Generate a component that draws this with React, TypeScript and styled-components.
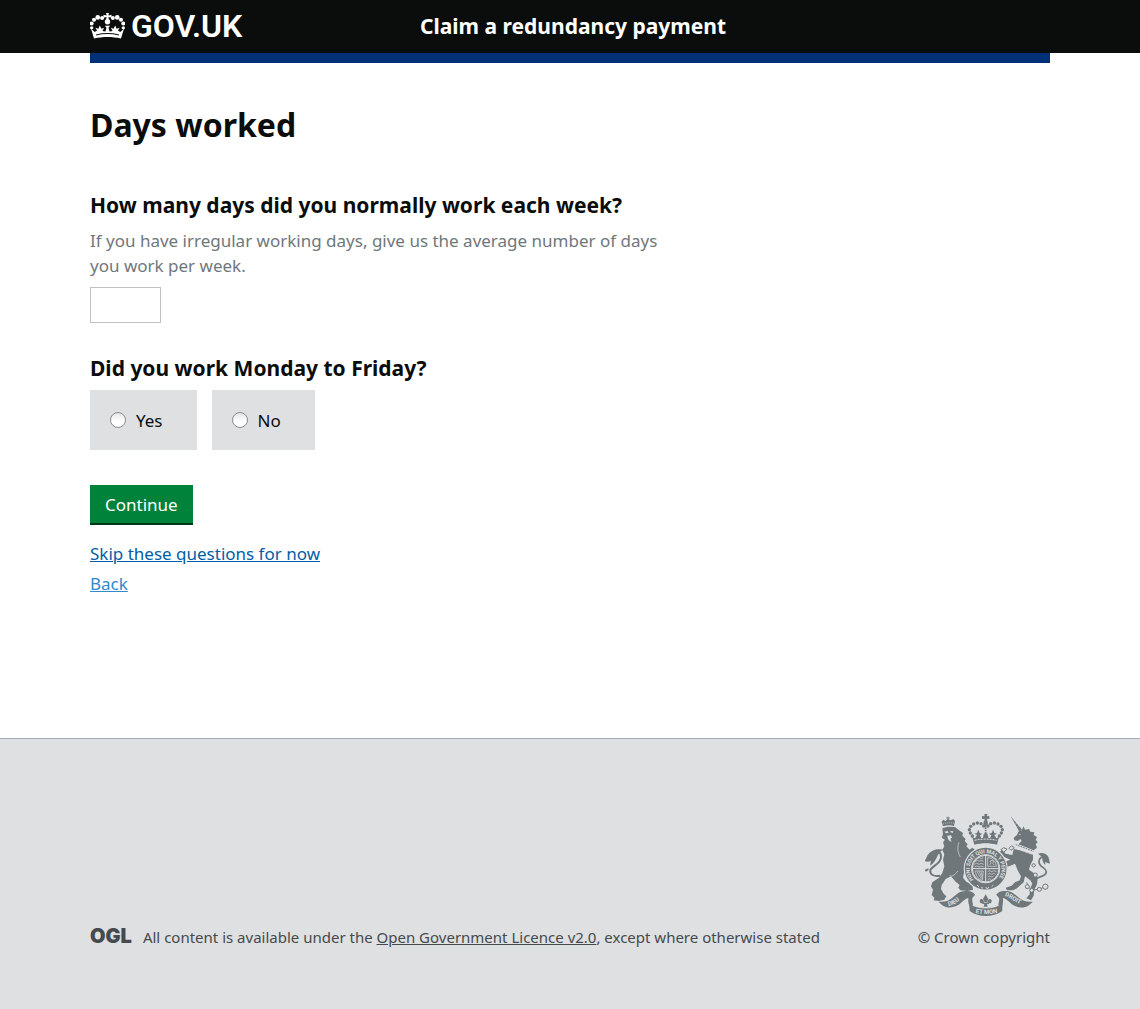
import React from 'react';
import styled, { createGlobalStyle } from 'styled-components';

const GlobalStyle = createGlobalStyle`
  *, *::before, *::after { box-sizing: border-box; }
  html { background: #dee0e2; }
  body {
    margin: 0;
    color: #0b0c0c;
    font-family: "Noto Sans", "Liberation Sans", sans-serif;
    font-size: 17px;
    line-height: 25px;
  }
  #root { min-height: 100vh; display: flex; flex-direction: column; }
`;

const Container = styled.div`
  max-width: 960px;
  margin: 0 auto;

  @media (max-width: 1020px) {
    margin: 0 30px;
  }
`;

const Header = styled.header`
  background: #0b0c0c;
`;

const HeaderRow = styled(Container)`
  display: flex;
  align-items: center;
  min-height: 53px;
  padding-bottom: 2px;
`;

const LogoColumn = styled.div`
  display: flex;
  flex: 0 0 330px;
`;

const LogoLink = styled.a`
  display: inline-flex;
  align-items: center;
  gap: 6px;
  color: #fff;
  font: 600 32px/42px Roboto, "Liberation Sans", sans-serif;
  text-decoration: none;
`;

const ServiceName = styled.a`
  color: #fff;
  font-size: 21px;
  font-weight: 700;
  line-height: 30px;
  text-decoration: none;
`;

const BlueBar = styled(Container)`
  height: 10px;
  background: #003078;
`;

const Main = styled.main`
  background: #fff;
  flex: 1 0 auto;
  padding-bottom: 139px;
`;

const PageTitle = styled.h1`
  margin: 40px 0 43px;
  font-size: 32px;
  font-weight: 700;
  line-height: 44px;
`;

const Question = styled.section`
  max-width: 600px;
  margin-bottom: 30px;
`;

const QuestionLabel = styled.label`
  display: block;
  font-size: 21px;
  font-weight: 700;
  line-height: 30px;
`;

const Hint = styled.p`
  margin: 8px 0 9px;
  color: #6f777b;
`;

const DaysInput = styled.input`
  display: block;
  width: 71px;
  height: 36px;
  padding: 4px;
  border: 1px solid #bfc1c3;
  font: inherit;
`;

const RadioGroup = styled.fieldset`
  margin: 0 0 35px;
  padding: 0;
  border: 0;
`;

const Legend = styled.legend`
  padding: 0;
  margin-bottom: 7px;
  font-size: 21px;
  font-weight: 700;
  line-height: 30px;
`;

const RadioRow = styled.div`
  display: flex;
  gap: 15px;
`;

const RadioBlock = styled.label`
  display: flex;
  align-items: center;
  gap: 10px;
  height: 60px;
  padding: 0 34px 0 20px;
  background: #dee0e2;
  cursor: pointer;
`;

const Radio = styled.input`
  appearance: none;
  width: 16px;
  height: 16px;
  margin: 0;
  border: 1px solid #8b8c8d;
  border-radius: 50%;
  background: linear-gradient(#e6e6e6, #fff 60%);

  &:checked {
    background: radial-gradient(circle, #0b0c0c 3px, #fff 4px);
  }
`;

const ContinueButton = styled.button`
  display: block;
  height: 40px;
  margin: 0 0 16px;
  padding: 0 15px;
  border: 0;
  border-bottom: 2px solid #003618;
  background: #00823b;
  color: #fff;
  font: inherit;
  cursor: pointer;
`;

const Links = styled.div`
  display: flex;
  flex-direction: column;
  align-items: flex-start;
  gap: 5px;
`;

const TextLink = styled.a<{ $color: string }>`
  color: ${(p) => p.$color};
`;

const Footer = styled.footer`
  border-top: 1px solid #a1acb2;
  background: #dee0e2;
  color: #454a4c;
  font-size: 15px;
  line-height: 25px;
  padding: 75px 0 59px;
`;

const FooterRow = styled(Container)`
  display: flex;
  align-items: flex-end;
  justify-content: space-between;
  gap: 30px;
`;

const Licence = styled.div`
  display: flex;
  align-items: center;
  gap: 11px;
`;

const OglMark = styled.a`
  color: #454a4c;
  font: 900 20px/20px Inter, "Liberation Sans", sans-serif;
  padding-bottom: 4px;
  text-decoration: none;
`;

const LicenceText = styled.p`
  margin: 0;
`;

const Copyright = styled.a`
  display: flex;
  flex-direction: column;
  align-items: flex-end;
  gap: 9px;
  color: inherit;
  text-decoration: none;
`;

function CrownIcon() {
  const beads: [number, number, number][] = [
    [5, 44, 5], [5, 31, 6], [12, 20, 6], [23, 13, 7], [36, 15, 6],
    [99, 44, 5], [99, 31, 6], [92, 20, 6], [81, 13, 7], [68, 15, 6],
  ];
  return (
    <svg width="35" height="26" viewBox="0 0 104 77" fill="#fff" aria-hidden="true">
      {beads.map(([x, y, r]) => <circle key={`${x}-${y}`} cx={x} cy={y} r={r} />)}
      <path d="M48 0h8l-1 7 9-2v9l-9-2 1 8h-8l1-8-9 2V5l9 2z" />
      <circle cx="52" cy="26" r="8" />
      <path d="M3 47L14 56L21 52L16 44L25 47L29 37L34 47L42 44L37 53L46 55L49 44L44 38H60L55 44L58 55L67 53L62 44L70 47L75 37L79 47L88 44L83 52L90 56L101 47L92 76C66 70 38 70 12 76Z" />
      <path d="M18 65C40 60 64 60 86 65" fill="none" stroke="#0b0c0c" strokeWidth="3" />
    </svg>
  );
}

function Lion() {
  return (
    <g>
      <path d="M84 64L80 50l5-6 6 4 8-6 8 4 8-4 5 6-3 15c-10-4-22-3-33 1z" />
      <path d="M99 46V35M94 39h10" fill="none" stroke="#6f777b" strokeWidth="3" />
      <path d="M84 57c10-4 22-5 33-2" fill="none" stroke="#dee0e2" strokeWidth="2" strokeDasharray="3 3" />
      <path d="M82 70L98 65L120 66L132 76L144 84L142 92L152 102L149 108L158 118L154 124L164 134L172 128L182 136L180 148L168 152L158 162L152 172L160 182L152 196L146 206L144 218L154 230L172 240L174 254L158 258L136 256L130 248L134 240L122 230L108 214L92 222L80 240L78 252L86 266L94 274L88 284L72 288L56 286L58 278L50 270L54 254L48 244L52 232L72 218L82 204L88 184L84 164L88 148L82 134L88 124L84 112L90 104L80 98L84 88Z" />
      <path d="M88 80l10-2 3 5-8 2zM107 78l8 1-2 5-7-3zM97 92l11-1 3 7-5 3 4 10-9-5-3-7z" fill="#dee0e2" />
      <path d="M76 212C56 216 44 208 46 196C48 184 78 178 78 156C78 142 70 136 62 138" fill="none" stroke="#6f777b" strokeWidth="6" />
      <path d="M84 134C64 130 48 136 38 150C34 158 32 164 28 168C36 172 42 170 48 167C46 173 46 178 46 182C58 174 62 164 66 156C70 146 74 140 84 134Z" />
      <path d="M29 195l11-5 1 5-8 5z" />
      <path d="M104 212C112 216 122 208 128 198M132 112C126 128 128 142 136 156" fill="none" stroke="#dee0e2" strokeWidth="2" />
    </g>
  );
}

function Unicorn() {
  return (
    <g>
      <path d="M287 34L321 74L313 80Z" />
      <path d="M293 48l6-2M300 57l6-2M306 65l7-3" stroke="#dee0e2" strokeWidth="1" />
      <path d="M310 80L320 76L326 64L330 74L342 72L346 80L358 82L356 90L366 96L362 104L368 112L362 118L366 128L356 136L310 118L320 108L316 102L308 108L298 106L296 98L306 90Z" />
      <path d="M311 88l6-2-1 5z" fill="#dee0e2" />
      <path d="M302 119L356 139" fill="none" stroke="#6f777b" strokeWidth="3" strokeDasharray="5 3" />
      <path d="M296 132L316 136L354 148L354 164L346 180L342 194L356 204L368 220L366 238L358 254L356 272L348 286L334 280L344 268L346 250L352 236L346 226L330 214L326 232L314 242L306 250L294 256L276 256L272 248L290 242L300 232L314 226L318 214L308 196L300 176L286 182L268 188L254 184L252 174L266 172L286 164L268 156L254 152L252 142L262 136L272 146L292 150Z" />
      <path d="M297 128L354 149M303 126L309 134L315 129L321 138L328 133L333 142L340 137L345 146L353 142" fill="none" stroke="#dee0e2" strokeWidth="2" />
      <path d="M290 122l-8 8 6 6 10-8zM276 132l-10-4-8 6 8 9z" fill="none" stroke="#6f777b" strokeWidth="3" />
      <path d="M364 220C378 214 394 212 394 200C394 188 374 188 372 172C371 160 380 152 394 158" fill="none" stroke="#6f777b" strokeWidth="5" />
      <path d="M369 146C384 140 398 148 401 158C403 165 403 170 406 176C398 174 394 173 391 170V180C384 174 381 165 382 157C378 153 374 149 369 146Z" />
      <g fill="#dee0e2" stroke="#6f777b" strokeWidth="3">
        <circle cx="356" cy="181" r="5" />
        <circle cx="361" cy="210" r="6" />
        <circle cx="337" cy="245" r="6" />
        <circle cx="350" cy="256" r="6" />
        <circle cx="373" cy="253" r="6" />
        <circle cx="391" cy="245" r="8" />
      </g>
      <path d="M343 249l4 3M356 255l11-2M379 250l5-2M338 239l-3-7" stroke="#6f777b" strokeWidth="3" />
    </g>
  );
}

function RoyalCrown() {
  const beads: [number, number][] = [
    [172, 93], [166, 84], [163, 74], [167, 64], [176, 57], [187, 54], [198, 56], [206, 63],
    [253, 93], [259, 84], [262, 74], [258, 64], [249, 57], [238, 54], [227, 56], [219, 63],
  ];
  return (
    <g>
      <path d="M208 27h9l-1 7 7-1v9l-7-1 1 8h-9l1-8-8 1v-9l8 1z" />
      <circle cx="212" cy="54" r="7" />
      {beads.map(([x, y]) => <circle key={`${x}-${y}`} cx={x} cy={y} r="5" />)}
      <path d="M212 60v34" stroke="#6f777b" strokeWidth="5" strokeDasharray="5 2" />
      <path d="M172 96L180 100L186 90L178 86L186 84L190 74L194 84L202 86L195 91L199 100L204 98L206 88L212 82L218 88L220 98L225 100L229 91L222 86L230 84L234 74L238 84L246 86L238 90L244 100L252 96L246 119C224 113 200 113 178 119Z" />
      <path d="M179 106c22-5 44-5 66 0" fill="none" stroke="#dee0e2" strokeWidth="3" strokeDasharray="6 3" />
    </g>
  );
}

function Shield() {
  return (
    <g>
      <circle cx="212" cy="191" r="66" fill="#dee0e2" />
      <circle cx="212" cy="191" r="53" fill="none" stroke="#6f777b" strokeWidth="19" />
      <circle cx="212" cy="191" r="41" />
      <defs>
        <path id="garter" d="M176 224 A48 48 0 1 1 248 224" />
      </defs>
      <text fill="#dee0e2" fontFamily="Roboto, sans-serif" fontSize="16" fontWeight="700">
        <textPath href="#garter">HONI SOIT QUI MAL Y PENSE</textPath>
      </text>
      <path d="M186 240l6 5M198 248l6 1M212 246l5 6 5-6M230 245l5-5" stroke="#dee0e2" strokeWidth="3" />
      <path d="M212 150v82M171 191h82" stroke="#dee0e2" strokeWidth="3" />
      <circle cx="212" cy="191" r="40" fill="none" stroke="#dee0e2" strokeWidth="3" />
      <g fill="none" stroke="#dee0e2" strokeWidth="2">
        <path d="M181 169l6-3 6 3 5-3 8 3M177 178l8-3 7 3 6-3 8 3M189 160l5-2 5 3 6-3M178 186l7-3 7 3 6-3 8 3" />
        <path d="M218 184v-26l12 2 12 14 2 10zM224 180l4-7-3-5 7-2 4 5-3 4 5 5" />
        <path d="M181 198h24l-3 28c-13-3-19-14-21-28zM186 200l13 22M192 199l9 19M198 199l4 14" />
        <path d="M218 200l6-3 6 3 6-3 9 3M218 208l6-3 6 3 6-3 6 3M218 216l6-3 6 3 6-3M218 224l5-3 6 3" />
      </g>
    </g>
  );
}

function Ribbons() {
  return (
    <g>
      <path d="M70 290C88 292 102 288 114 277C127 265 137 256 157 258C168 258 176 262 180 270L164 282C158 276 150 282 140 292C126 308 100 312 84 302Z" />
      <path d="M354 290C336 292 322 288 310 277C297 265 287 256 267 258C256 258 248 262 244 270L260 282C266 276 274 282 284 292C298 308 324 312 340 302Z" />
      <path d="M180 268C168 268 158 277 160 290C161 298 164 302 164 318C190 338 234 338 262 318C261 302 264 298 264 290C266 277 256 268 244 268L252 280C254 288 250 292 250 302C230 311 196 311 174 302C174 292 170 288 172 280Z" />
      <path d="M173 301C198 312 228 312 251 301" fill="none" stroke="#dee0e2" strokeWidth="2" />
      <path d="M212 268l8 14-5 10h-6l-5-10zM194 287c3-10 14-3 13 7l-5-1c-1 4-8 2-8-6zM230 287c-3-10-14-3-13 7l5-1c1 4 8 2 8-6zM202 293h20v4h-20zM208 297h8l2 8h-12z" />
      <defs>
        <path id="motto-left" d="M100 303C124 300 130 284 158 270" />
        <path id="motto-centre" d="M166 320Q212 334 264 320" />
        <path id="motto-right" d="M269 273C290 278 302 299 336 302" />
      </defs>
      <g fill="#dee0e2" fontFamily="Roboto, sans-serif" fontSize="18" fontWeight="700">
        <text><textPath href="#motto-left">DIEU</textPath></text>
        <text><textPath href="#motto-centre" startOffset="16">ET MON</textPath></text>
        <text><textPath href="#motto-right">DROIT</textPath></text>
      </g>
    </g>
  );
}

function RoyalArms() {
  return (
    <svg width="125" height="102" viewBox="30 27 375 306" fill="#6f777b" aria-hidden="true">
      <Lion />
      <Unicorn />
      <RoyalCrown />
      <Shield />
      <Ribbons />
    </svg>
  );
}

export default function App() {
  return (
    <>
      <GlobalStyle />
      <Header>
        <HeaderRow>
          <LogoColumn>
            <LogoLink href="#">
              <CrownIcon />
              GOV.UK
            </LogoLink>
          </LogoColumn>
          <ServiceName href="#">Claim a redundancy payment</ServiceName>
        </HeaderRow>
      </Header>
      <Main>
        <BlueBar />
        <Container as="form">
          <PageTitle>Days worked</PageTitle>
          <Question>
            <QuestionLabel htmlFor="days">How many days did you normally work each week?</QuestionLabel>
            <Hint id="days-hint">
              If you have irregular working days, give us the average number of days you work per week.
            </Hint>
            <DaysInput id="days" name="days" type="text" aria-describedby="days-hint" />
          </Question>
          <RadioGroup>
            <Legend>Did you work Monday to Friday?</Legend>
            <RadioRow>
              <RadioBlock htmlFor="weekdays-yes">
                <Radio type="radio" id="weekdays-yes" name="weekdays" value="yes" />
                Yes
              </RadioBlock>
              <RadioBlock htmlFor="weekdays-no">
                <Radio type="radio" id="weekdays-no" name="weekdays" value="no" />
                No
              </RadioBlock>
            </RadioRow>
          </RadioGroup>
          <ContinueButton type="button">Continue</ContinueButton>
          <Links>
            <TextLink href="#" $color="#005ea5">Skip these questions for now</TextLink>
            <TextLink href="#" $color="#2e8aca">Back</TextLink>
          </Links>
        </Container>
      </Main>
      <Footer>
        <FooterRow>
          <Licence>
            <OglMark href="#">OGL</OglMark>
            <LicenceText>
              All content is available under the{' '}
              <TextLink href="#" $color="inherit">Open Government Licence v2.0</TextLink>, except where
              otherwise stated
            </LicenceText>
          </Licence>
          <Copyright href="#">
            <RoyalArms />
            © Crown copyright
          </Copyright>
        </FooterRow>
      </Footer>
    </>
  );
}
